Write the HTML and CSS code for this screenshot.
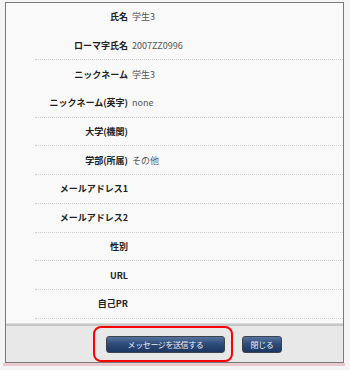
FILE: index.html
```html
<!DOCTYPE html>
<html lang="ja">
<head>
    <meta charset="UTF-8">
    <meta name="viewport" content="width=device-width, initial-scale=1.0">
    <title>プロフィール</title>
    <link rel="stylesheet" href="styles.css">
</head>
<body>
    <div class="frame">
        <div class="profile">
            <div class="row">
                <div class="label">氏名</div>
                <div class="value">学生3</div>
            </div>
            <div class="row sep">
                <div class="label">ローマ字氏名</div>
                <div class="value">2007ZZ0996</div>
            </div>
            <div class="row">
                <div class="label">ニックネーム</div>
                <div class="value">学生3</div>
            </div>
            <div class="row sep">
                <div class="label">ニックネーム(英字)</div>
                <div class="value">none</div>
            </div>
            <div class="row sep">
                <div class="label">大学(機関)</div>
                <div class="value"></div>
            </div>
            <div class="row sep">
                <div class="label">学部(所属)</div>
                <div class="value">その他</div>
            </div>
            <div class="row sep">
                <div class="label">メールアドレス1</div>
                <div class="value"></div>
            </div>
            <div class="row sep">
                <div class="label">メールアドレス2</div>
                <div class="value"></div>
            </div>
            <div class="row sep">
                <div class="label">性別</div>
                <div class="value"></div>
            </div>
            <div class="row sep">
                <div class="label">URL</div>
                <div class="value"></div>
            </div>
            <div class="row sep">
                <div class="label">自己PR</div>
                <div class="value"></div>
            </div>
        </div>
        <div class="footer">
            <button class="btn btn-send">メッセージを送信する</button>
            <button class="btn btn-close">閉じる</button>
        </div>
    </div>
    <div class="strip"></div>
    <div class="highlight"></div>
</body>
</html>
```

FILE: styles.css
```css
body {
    margin: 0;
    padding-top: 2px;
    background-color: #f4f4f4;
    font-family: "Noto Sans CJK JP", "Liberation Sans", sans-serif;
    font-size: 9px;
}
.frame {
    margin-left: 5px;
    width: 337px;
    height: 359px;
    border: 1px solid #7a7a7a;
    background-color: #f9f9f9;
    display: flex;
    flex-direction: column;
}
.profile {
    height: 320px;
    overflow: hidden;
}
.row {
    display: grid;
    grid-template-columns: 93px 1fr;
    column-gap: 4px;
    align-items: center;
    height: 27.7px;
    margin-left: 29px;
    border-bottom: 1px dotted transparent;
}
.row.sep {
    border-bottom-color: #cfcfcf;
}
.label {
    text-align: right;
    font-weight: bold;
    color: #222;
    white-space: nowrap;
}
.value {
    color: #555;
}
.footer {
    flex: 1;
    border-top: 1px solid #dcdcdc;
    box-shadow: inset 0 2px 0 #c6c6c6;
    background-color: #e8e8e8;
    display: flex;
    align-items: flex-start;
    gap: 17px;
    padding: 12px 0 0 100px;
}
.btn {
    height: 17px;
    padding: 0;
    border: 1px solid #3f444c;
    border-radius: 3px;
    background: linear-gradient(#56739f, #2f4d7a 45%, #1b3661);
    color: #e8eef8;
    font-family: "Noto Sans CJK JP", "Liberation Sans", sans-serif;
    font-size: 8px;
    line-height: 15px;
    letter-spacing: -0.4px;
    cursor: pointer;
}
.btn-send {
    width: 119px;
}
.btn-close {
    width: 40px;
}
.strip {
    margin-left: 3px;
    width: 342px;
    height: 3px;
    background-color: #e8c9ce;
}
.highlight {
    position: absolute;
    left: 93px;
    top: 326px;
    width: 136px;
    height: 32px;
    border: 2px solid #f00;
    border-radius: 8px;
}
```
